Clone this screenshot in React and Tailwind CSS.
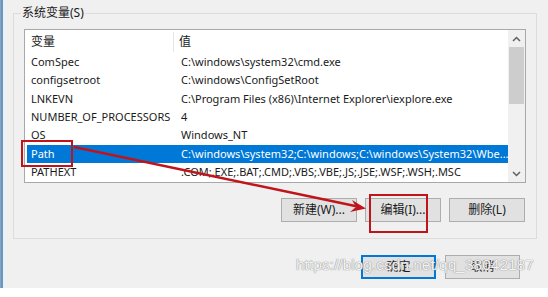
import React from "react";

const rows = [
  ["ComSpec", "C:\\windows\\system32\\cmd.exe"],
  ["configsetroot", "C:\\windows\\ConfigSetRoot"],
  ["LNKEVN", "C:\\Program Files (x86)\\Internet Explorer\\iexplore.exe"],
  ["NUMBER_OF_PROCESSORS", "4"],
  ["OS", "Windows_NT"],
  ["Path", "C:\\windows\\system32;C:\\windows;C:\\windows\\System32\\Wbe..."],
  ["PATHEXT", ".COM;.EXE;.BAT;.CMD;.VBS;.VBE;.JS;.JSE;.WSF;.WSH;.MSC"],
];

function Btn({ children, className = "" }) {
  return (
    <div
      className={
        "h-[24px] flex items-center justify-center bg-[#e1e1e1] border text-[12px] text-[#1a1a1a] " +
        className
      }
    >
      {children}
    </div>
  );
}

export default function App() {
  return (
    <div
      className="w-[548px] h-[297px] bg-white relative overflow-hidden"
      style={{ fontFamily: "'Noto Sans','Noto Sans CJK SC',sans-serif" }}
    >
      <div className="h-[288px] bg-[#f0f0f0] flex">
        <div className="w-[1px] bg-[#9aa0a6]" />
        <div className="w-[2px] bg-[#5b9bd5]" />
        <div className="flex-1 flex flex-col pl-[10px] pt-[13px]">
          {/* group box */}
          <div className="relative w-[524px] h-[226px] border border-[#dcdcdc] pl-[10px] pt-[15px] pr-[11px]">
            <div className="absolute left-[7px] top-[-8px] px-[1px] bg-[#f0f0f0] text-[12px] leading-[14px] text-[#1a1a1a]">
              系统变量(S)
            </div>
            {/* list view */}
            <div className="w-[502px] h-[154px] border border-[#a8a8a8] bg-white flex">
              <div className="flex-1 min-w-0 overflow-hidden flex flex-col text-[11px] text-[#1a1a1a]">
                <div className="h-[23px] flex items-center text-[12px]">
                  <div className="w-[149px] pl-[6px] h-[20px] flex items-center border-r border-[#e5e5e5]">变量</div>
                  <div className="pl-[5px]">值</div>
                </div>
                {rows.map(([k, v]) => {
                  const sel = k === "Path";
                  return (
                    <div
                      key={k}
                      className={
                        "h-[18.33px] flex items-center ml-[2px] whitespace-nowrap " +
                        (sel ? "bg-[#0078d7] text-white" : "")
                      }
                    >
                      <div className="w-[151px] shrink-0 pl-[4px]">{k}</div>
                      <div className="pl-[3px]">{v}</div>
                    </div>
                  );
                })}
              </div>
              {/* scrollbar */}
              <div className="w-[17px] shrink-0 bg-[#f0f0f0] flex flex-col items-center">
                <div className="h-[17px] flex items-center justify-center">
                  <svg width="9" height="6" viewBox="0 0 9 6">
                    <path d="M1 5 L4.5 1.5 L8 5" fill="none" stroke="#606060" strokeWidth="1.5" />
                  </svg>
                </div>
                <div className="w-[15px] h-[57px] bg-[#cdcdcd]" />
                <div className="flex-1" />
                <div className="h-[17px] flex items-center justify-center">
                  <svg width="9" height="6" viewBox="0 0 9 6">
                    <path d="M1 1 L4.5 4.5 L8 1" fill="none" stroke="#606060" strokeWidth="1.5" />
                  </svg>
                </div>
              </div>
            </div>
            {/* buttons */}
            <div className="flex justify-end gap-[8px] mt-[15px]">
              <Btn className="w-[76px] border-[#adadad]">新建(W)...</Btn>
              <Btn className="w-[76px] border-[#adadad]">编辑(I)...</Btn>
              <Btn className="w-[76px] border-[#adadad]">删除(L)</Btn>
            </div>
          </div>
          {/* bottom buttons */}
          <div className="flex justify-end gap-[9px] mt-[16px] pr-[28px]">
            <Btn className="w-[75px] border-2 border-[#0078d7]">确定</Btn>
            <Btn className="w-[75px] border-[#adadad]">取消</Btn>
          </div>
        </div>
      </div>

      {/* annotations */}
      <div className="absolute left-[21px] top-[140px] w-[52px] h-[27px] border-2 border-[#c0141b]" />
      <div className="absolute left-[369px] top-[194px] w-[59px] h-[39px] border-2 border-[#c0141b]" />
      <svg className="absolute left-0 top-0" width="548" height="297">
        <line x1="74" y1="147" x2="360" y2="207" stroke="#c0141b" strokeWidth="2.5" />
        <path d="M366 208.5 L352 200 L356 207 L350 212 Z" fill="#c0141b" />
      </svg>
      <div
        className="absolute left-[296px] top-[256px] text-[15.5px] leading-[18px] text-white/90 whitespace-nowrap [text-shadow:0_0_1px_#888,0_0_1px_#888]"
        style={{ fontFamily: "'Liberation Sans',sans-serif" }}
      >
        https://blog.csdn.net/qq_38042187
      </div>
    </div>
  );
}
